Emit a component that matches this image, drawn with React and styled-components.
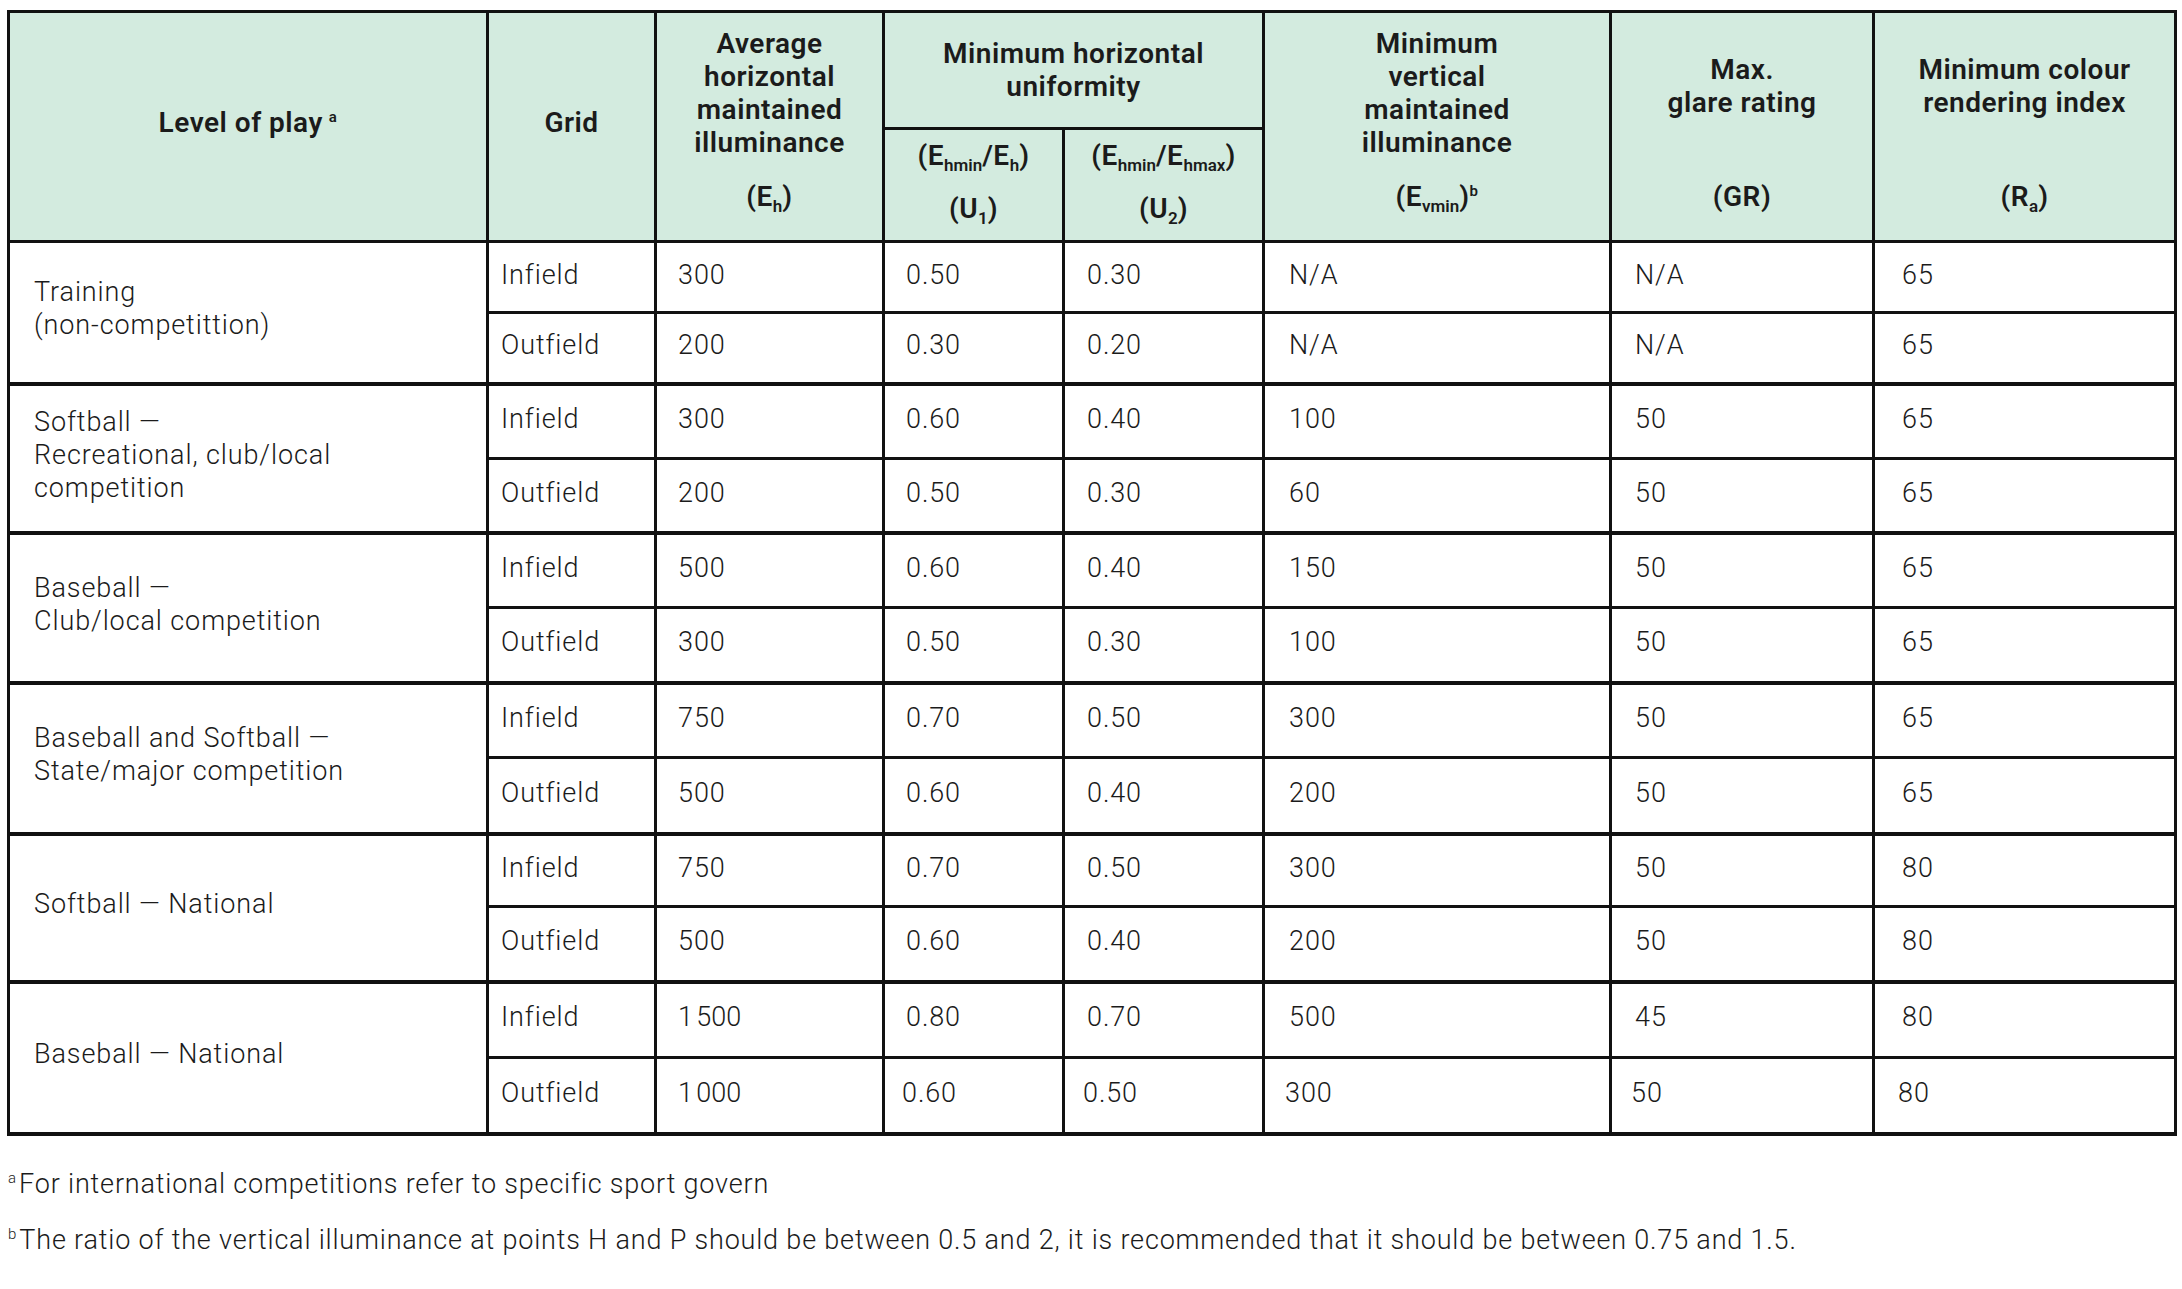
import React from 'react';
import styled, { createGlobalStyle } from 'styled-components';

const GlobalStyle = createGlobalStyle`
  html, body {
    margin: 0;
    padding: 0;
    background: #ffffff;
  }
  body {
    font-family: Roboto, "Liberation Sans", sans-serif;
    color: #1b1b1b;
  }
`;

const Page = styled.div`
  padding: 10px 8px 0 7px;
`;

const Table = styled.table`
  width: 2167px;
  border-collapse: collapse;
  table-layout: fixed;
  border: 3px solid #111;
`;

const HeadCell = styled.th`
  background: #d3ebdf;
  border: 3px solid #111;
  padding: 0 0 ${(p) => p.$pb || '0'} 0;
  font-size: 28px;
  font-weight: 600;
  letter-spacing: 0.5px;
  line-height: 33px;
  text-align: center;
  vertical-align: ${(p) => (p.$top ? 'top' : 'middle')};
  white-space: nowrap;
  height: ${(p) => p.$h || 'auto'};
`;

const TitleBlock = styled.div`
  height: 160px;
  box-sizing: border-box;
  padding-bottom: ${(p) => (p.$short ? '14px' : '0')};
  display: flex;
  align-items: center;
  justify-content: center;
`;

const Symbol = styled.div`
  height: 48px;
  line-height: 48px;
`;

const SubHead = styled.div`
  display: flex;
  flex-direction: column;
  gap: 20px;
  padding-bottom: 7px;
`;

const Sup = styled.sup`
  font-size: 15px;
  vertical-align: 10px;
  line-height: 0;
  margin-left: ${(p) => p.$gap || '0'};
`;

const Sub = styled.sub`
  font-size: 17px;
  vertical-align: -6px;
  line-height: 0;
  letter-spacing: 0;
`;

const Row = styled.tr`
  height: ${(p) => p.$h}px;
  border-bottom: ${(p) => (p.$end ? '4px' : '3px')} solid #111;
`;

const LevelCell = styled.td`
  border: 3px solid #111;
  border-bottom-width: 4px;
  padding: 0 0 6px 24px;
  font-size: 27px;
  font-weight: 300;
  letter-spacing: 0.9px;
  line-height: 33px;
  vertical-align: middle;
  white-space: nowrap;
`;

const Cell = styled.td`
  border: 3px solid #111;
  padding: 0 0 4px ${(p) => p.$pad}px;
  font-size: 27px;
  font-weight: 300;
  letter-spacing: 0.9px;
  line-height: 33px;
  vertical-align: middle;
  white-space: nowrap;
`;

const Notes = styled.div`
  padding: 32px 0 0 1px;
  display: flex;
  flex-direction: column;
  gap: 23px;
`;

const Note = styled.p`
  margin: 0;
  font-size: 27px;
  font-weight: 300;
  letter-spacing: 0.82px;
  line-height: 33px;
  white-space: nowrap;
`;

const NoteMark = styled.span`
  font-size: 15px;
  vertical-align: 10px;
  line-height: 0;
  margin-right: 3px;
  letter-spacing: 0;
`;

const widths = [479, 168, 228, 180, 200, 347, 263, 302];
const pads = [12, 21, 21, 22, 24, 23, 27];

const groups = [
  {
    level: ['Training', '(non-competittion)'],
    h: [71, 71],
    rows: [
      ['Infield', '300', '0.50', '0.30', 'N/A', 'N/A', '65'],
      ['Outfield', '200', '0.30', '0.20', 'N/A', 'N/A', '65'],
    ],
  },
  {
    level: ['Softball —', 'Recreational, club/local', 'competition'],
    h: [75, 74],
    rows: [
      ['Infield', '300', '0.60', '0.40', '100', '50', '65'],
      ['Outfield', '200', '0.50', '0.30', '60', '50', '65'],
    ],
  },
  {
    level: ['Baseball —', 'Club/local competition'],
    h: [75, 75],
    rows: [
      ['Infield', '500', '0.60', '0.40', '150', '50', '65'],
      ['Outfield', '300', '0.50', '0.30', '100', '50', '65'],
    ],
  },
  {
    level: ['Baseball and Softball —', 'State/major competition'],
    h: [75, 76],
    rows: [
      ['Infield', '750', '0.70', '0.50', '300', '50', '65'],
      ['Outfield', '500', '0.60', '0.40', '200', '50', '65'],
    ],
  },
  {
    level: ['Softball — National'],
    h: [73, 75],
    rows: [
      ['Infield', '750', '0.70', '0.50', '300', '50', '80'],
      ['Outfield', '500', '0.60', '0.40', '200', '50', '80'],
    ],
  },
  {
    level: ['Baseball — National'],
    h: [76, 76],
    rows: [
      ['Infield', '1\u202F500', '0.80', '0.70', '500', '45', '80'],
      ['Outfield', '1\u202F000', '0.60', '0.50', '300', '50', '80'],
    ],
  },
];

const Lines = ({ lines }) =>
  lines.map((l, i) => (
    <React.Fragment key={i}>
      {i > 0 && <br />}
      {l}
    </React.Fragment>
  ));

export default function App() {
  return (
    <Page>
      <GlobalStyle />
      <Table>
        <colgroup>
          {widths.map((w, i) => (
            <col key={i} style={{ width: w }} />
          ))}
        </colgroup>
        <thead>
          <tr>
            <HeadCell rowSpan={2} $h="114px" $pb="8px">
              Level of play<Sup $gap="6px">a</Sup>
            </HeadCell>
            <HeadCell rowSpan={2} $pb="8px">
              Grid
            </HeadCell>
            <HeadCell rowSpan={2} $top>
              <TitleBlock>
                <Lines lines={['Average', 'horizontal', 'maintained', 'illuminance']} />
              </TitleBlock>
              <Symbol>
                (E<Sub>h</Sub>)
              </Symbol>
            </HeadCell>
            <HeadCell colSpan={2} $h="114px">
              <Lines lines={['Minimum horizontal', 'uniformity']} />
            </HeadCell>
            <HeadCell rowSpan={2} $top>
              <TitleBlock>
                <Lines lines={['Minimum', 'vertical', 'maintained', 'illuminance']} />
              </TitleBlock>
              <Symbol>
                (E<Sub>vmin</Sub>)<Sup>b</Sup>
              </Symbol>
            </HeadCell>
            <HeadCell rowSpan={2} $top>
              <TitleBlock $short>
                <Lines lines={['Max.', 'glare rating']} />
              </TitleBlock>
              <Symbol>(GR)</Symbol>
            </HeadCell>
            <HeadCell rowSpan={2} $top>
              <TitleBlock $short>
                <Lines lines={['Minimum colour', 'rendering index']} />
              </TitleBlock>
              <Symbol>
                (R<Sub>a</Sub>)
              </Symbol>
            </HeadCell>
          </tr>
          <tr>
            <HeadCell $h="110px">
              <SubHead>
                <span>
                  (E<Sub>hmin</Sub>/E<Sub>h</Sub>)
                </span>
                <span>
                  (U<Sub>1</Sub>)
                </span>
              </SubHead>
            </HeadCell>
            <HeadCell $h="110px">
              <SubHead>
                <span>
                  (E<Sub>hmin</Sub>/E<Sub>hmax</Sub>)
                </span>
                <span>
                  (U<Sub>2</Sub>)
                </span>
              </SubHead>
            </HeadCell>
          </tr>
        </thead>
        <tbody>
          {groups.map((g, gi) =>
            g.rows.map((r, ri) => {
              const last = gi === groups.length - 1 && ri === 1;
              return (
                <Row key={`${gi}-${ri}`} $h={g.h[ri]} $end={ri === 1}>
                  {ri === 0 && (
                    <LevelCell rowSpan={2}>
                      <Lines lines={g.level} />
                    </LevelCell>
                  )}
                  {r.map((v, ci) => (
                    <Cell key={ci} $pad={last && ci > 1 ? pads[ci] - 4 : pads[ci]}>
                      {v}
                    </Cell>
                  ))}
                </Row>
              );
            })
          )}
        </tbody>
      </Table>
      <Notes>
        <Note>
          <NoteMark>a</NoteMark>For international competitions refer to specific sport govern
        </Note>
        <Note>
          <NoteMark>b</NoteMark>The ratio of the vertical illuminance at points H and P should be
          between 0.5 and 2, it is recommended that it should be between 0.75 and 1.5.
        </Note>
      </Notes>
    </Page>
  );
}
